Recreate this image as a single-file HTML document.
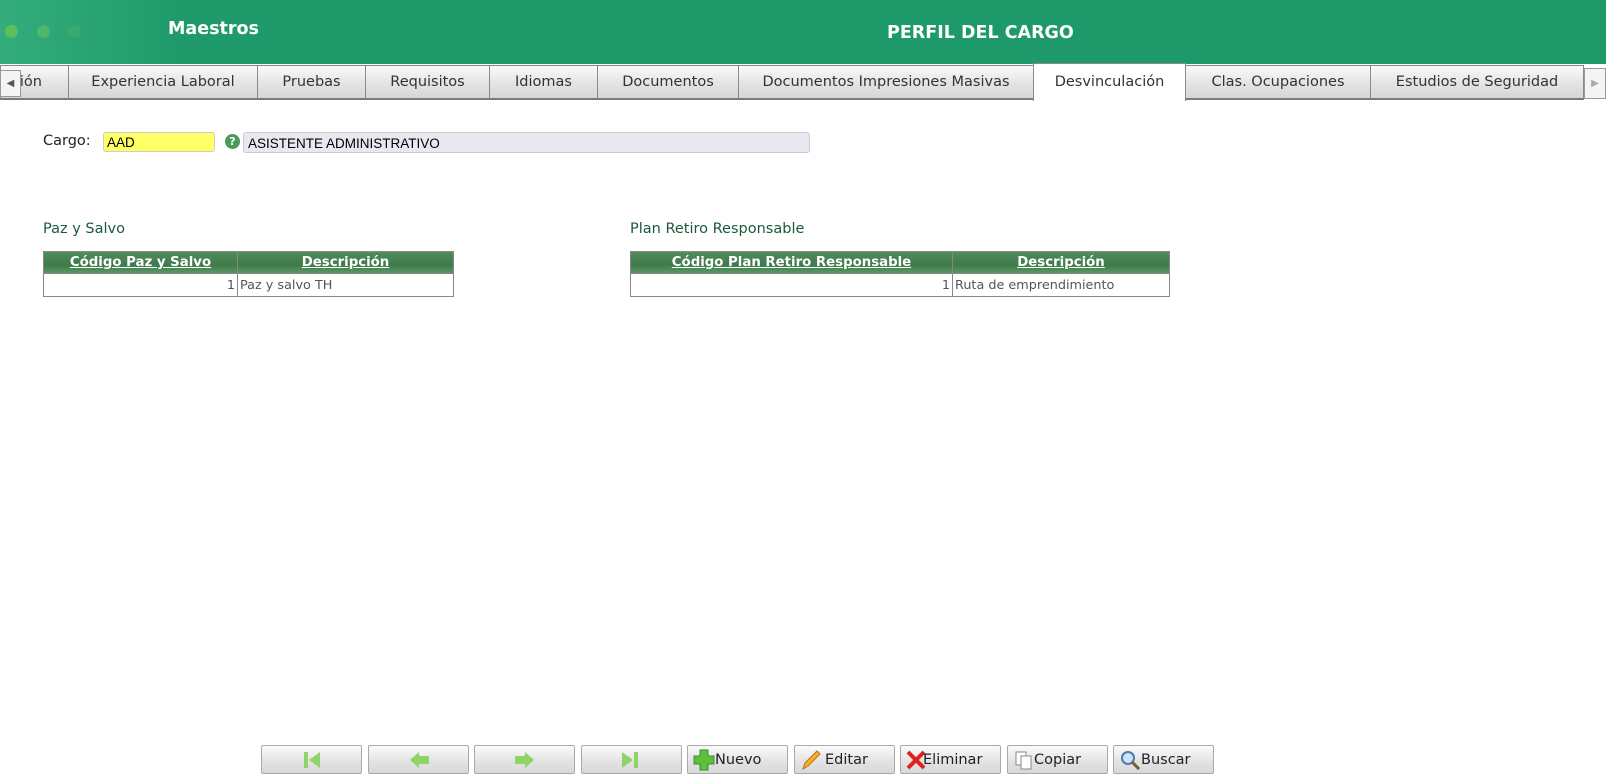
<!DOCTYPE html>
<html><head><meta charset="utf-8"><style>
body{margin:0;width:1606px;height:775px;background:#fff;font-family:"DejaVu Sans","Liberation Sans",sans-serif;position:relative;overflow:hidden}
.hdr{position:absolute;left:0;top:0;width:1606px;height:64px;background:linear-gradient(90deg,#34ad7c 0,#1f9a6a 180px,#1e9a6a 100%)}
.dot{position:absolute;top:25px;width:13px;height:13px;border-radius:50%}
.tab{position:absolute;top:65px;border:1px solid #8a8a8a;border-bottom:2px solid #7a7a7a;background:linear-gradient(#fafafa,#e2e2e2 60%,#d6d6d6);font-size:14.5px;color:#333;text-align:center;line-height:33px;box-sizing:border-box;height:35px}
.tab.act{background:#fff;border-bottom:none;top:63px;height:38px;line-height:36px}
.abs{position:absolute}
table{border-collapse:collapse;position:absolute;font-size:12.8px}
th{background:linear-gradient(#4f8a5a,#3f7a4c 60%,#5a9a64);color:#fff;text-decoration:underline;height:21px;border:1px solid #888;font-size:13.3px;font-weight:bold;padding:0}
td{border:1px solid #888;height:22px;color:#555;padding:0 2px}
.btn{position:absolute;top:745px;width:101px;height:29px;box-sizing:border-box;border:1px solid #aaa;border-radius:2px;background:linear-gradient(#fbfbfb,#e4e4e4 55%,#d8d8d8);font-size:14.5px;color:#222;line-height:28px}
</style></head><body>
<div class="hdr">
<div class="dot" style="left:5px;background:#5cbf5c"></div>
<div class="dot" style="left:37px;background:#4fb768"></div>
<div class="dot" style="left:68px;background:#3aa970"></div>
<div class="abs" style="left:168px;top:19px;color:#fff;font-weight:bold;font-size:17.5px">Maestros</div>
<div class="abs" style="left:887px;top:23px;color:#fff;font-weight:bold;font-size:17.5px">PERFIL DEL CARGO</div>
</div>
<div class="tab" style="left:0;width:69px;text-align:right;padding-right:26px">ión</div>
<div class="abs" style="left:0;top:70px;width:19px;height:25px;border:1px solid #999;background:#f4f4f4;font-size:10px;line-height:25px;text-align:center;color:#555">◀</div>
<div class="tab" style="left:68px;width:190px">Experiencia Laboral</div>
<div class="tab" style="left:257px;width:109px">Pruebas</div>
<div class="tab" style="left:365px;width:125px">Requisitos</div>
<div class="tab" style="left:489px;width:109px">Idiomas</div>
<div class="tab" style="left:597px;width:142px">Documentos</div>
<div class="tab" style="left:738px;width:296px">Documentos Impresiones Masivas</div>
<div class="tab act" style="left:1033px;width:153px">Desvinculación</div>
<div class="tab" style="left:1185px;width:186px">Clas. Ocupaciones</div>
<div class="tab" style="left:1370px;width:214px">Estudios de Seguridad</div>
<div class="abs" style="left:1584px;top:68px;width:20px;height:29px;border:1px solid #999;background:#f4f4f4;font-size:10px;line-height:29px;text-align:center;color:#aaa">▶</div>

<div class="abs" style="left:43px;top:133px;font-size:14.5px;color:#222">Cargo:</div>
<div class="abs" style="left:103px;top:132px;width:112px;height:20px;background:#ffff66;border:1px solid #ccc;border-radius:3px;font-family:'Liberation Sans',sans-serif;font-size:13.5px;line-height:20px;padding-left:3px;box-sizing:border-box">AAD</div>
<div class="abs" style="left:225px;top:134px;width:15px;height:15px;border-radius:50%;background:#4a9a5a;color:#fff;font-size:11px;line-height:15px;text-align:center;font-weight:bold">?</div>
<div class="abs" style="left:243px;top:132px;width:567px;height:21px;background:#e8e8f0;border:1px solid #ccc;border-radius:3px;font-family:'Liberation Sans',sans-serif;font-size:13.5px;line-height:21px;padding-left:4px;box-sizing:border-box">ASISTENTE ADMINISTRATIVO</div>

<div class="abs" style="left:43px;top:221px;font-size:14.5px;color:#1a5a3a">Paz y Salvo</div>
<table style="left:43px;top:251px;width:411px"><tr><th style="width:193px">Código Paz y Salvo</th><th>Descripción</th></tr><tr><td style="text-align:right">1</td><td>Paz y salvo TH</td></tr></table>
<div class="abs" style="left:630px;top:221px;font-size:14.5px;color:#1a5a3a">Plan Retiro Responsable</div>
<table style="left:630px;top:251px;width:540px"><tr><th style="width:321px">Código Plan Retiro Responsable</th><th>Descripción</th></tr><tr><td style="text-align:right">1</td><td>Ruta de emprendimiento</td></tr></table>

<div class="btn" style="left:261px"><svg class="abs" style="left:40px;top:4px" width="20" height="20"><rect x="2" y="2" width="4" height="16" fill="#8fd36a"/><path d="M18 2 L7 10 L18 18Z" fill="#8fd36a"/></svg></div>
<div class="btn" style="left:368px"><svg class="abs" style="left:40px;top:4px" width="22" height="20"><path d="M1 10 L10 2 L10 6 L20 6 L20 14 L10 14 L10 18Z" fill="#8fd36a"/></svg></div>
<div class="btn" style="left:474px"><svg class="abs" style="left:38px;top:4px" width="22" height="20"><path d="M21 10 L12 2 L12 6 L2 6 L2 14 L12 14 L12 18Z" fill="#8fd36a"/></svg></div>
<div class="btn" style="left:581px"><svg class="abs" style="left:38px;top:4px" width="20" height="20"><path d="M2 2 L13 10 L2 18Z" fill="#8fd36a"/><rect x="14" y="2" width="4" height="16" fill="#8fd36a"/></svg></div>
<div class="btn" style="left:687px"><svg class="abs" style="left:5px;top:3px" width="22" height="22"><path d="M7 1h8v6h6v8h-6v6H7v-6H1V7h6z" fill="#5cc23c" stroke="#3a8a2a"/></svg><span class="abs" style="left:27px">Nuevo</span></div>
<div class="btn" style="left:794px"><svg class="abs" style="left:5px;top:3px" width="22" height="22"><path d="M3 20 L5 14 L17 2 L20 5 L8 17Z" fill="#f0b030" stroke="#c07010"/></svg><span class="abs" style="left:30px">Editar</span></div>
<div class="btn" style="left:900px"><svg class="abs" style="left:5px;top:4px" width="20" height="20"><path d="M2 2 L18 18 M18 2 L2 18" stroke="#e02020" stroke-width="4"/></svg><span class="abs" style="left:22px">Eliminar</span></div>
<div class="btn" style="left:1007px"><svg class="abs" style="left:6px;top:4px" width="20" height="20"><rect x="2" y="2" width="10" height="13" fill="#fff" stroke="#888"/><rect x="7" y="6" width="10" height="13" fill="#fff" stroke="#888"/></svg><span class="abs" style="left:26px">Copiar</span></div>
<div class="btn" style="left:1113px"><svg class="abs" style="left:5px;top:3px" width="22" height="22"><circle cx="9" cy="9" r="6" fill="#cfe4f8" stroke="#4a7ab0" stroke-width="2"/><path d="M13 13 L20 20" stroke="#7a5a30" stroke-width="3"/></svg><span class="abs" style="left:27px">Buscar</span></div>
</body></html>
